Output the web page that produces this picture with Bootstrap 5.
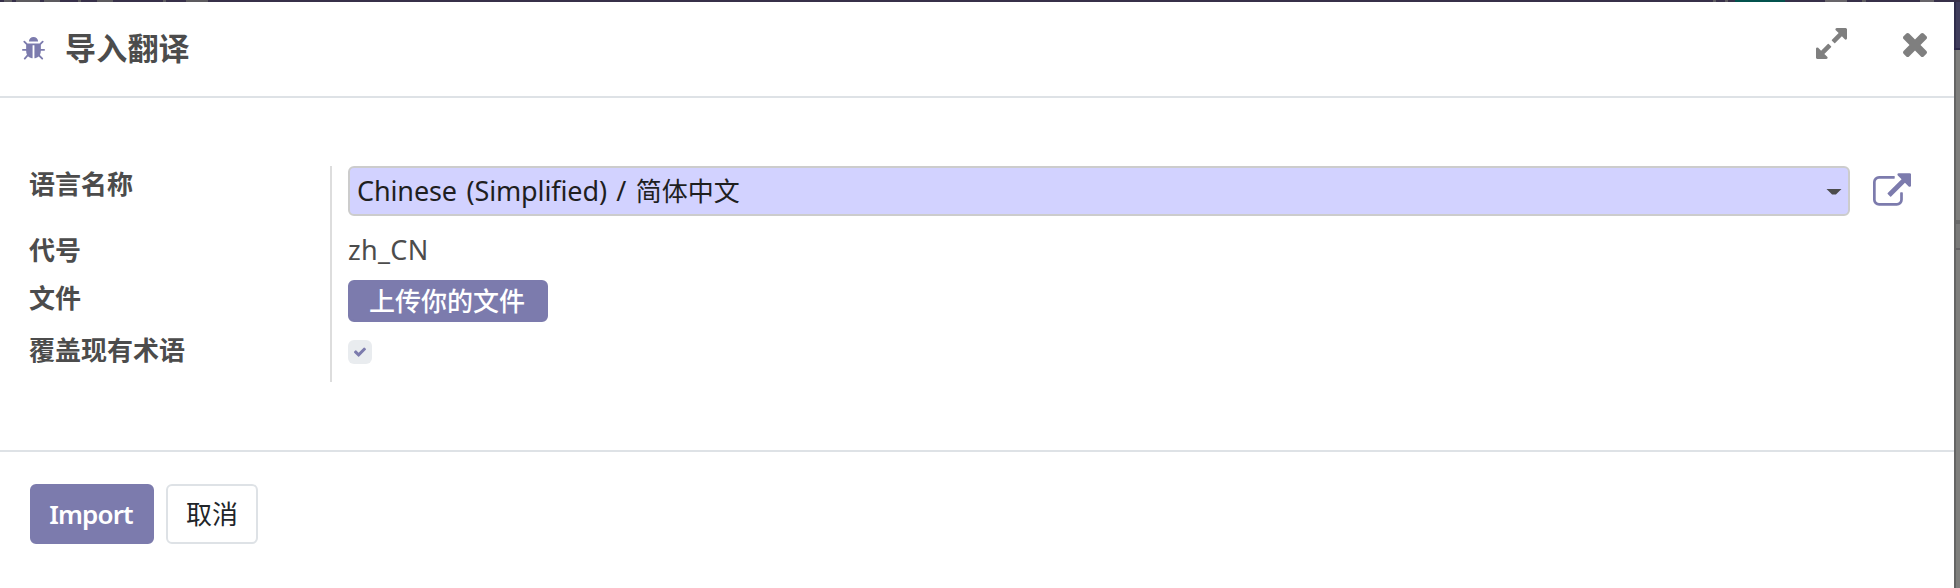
<!DOCTYPE html>
<html lang="zh-CN">
<head>
<meta charset="utf-8">
<title>导入翻译</title>
<link href="https://cdn.jsdelivr.net/npm/bootstrap@5.3.0/dist/css/bootstrap.min.css" rel="stylesheet">
<style>
:root{--brand:#7c7bad}
html,body{height:100%;overflow:hidden}
body{font-family:"Noto Sans","Noto Sans CJK SC",sans-serif;font-size:26px;line-height:30px;color:#4c4c4c;background:#7f7f7d}
svg{display:block;fill:currentColor}
.topstrip{height:2px;background:linear-gradient(#5d5b5f,#5d5b5f) 4px 0/8px 2px no-repeat,linear-gradient(#5d5b5f,#5d5b5f) 16px 0/24px 2px no-repeat,linear-gradient(#5d5b5f,#5d5b5f) 44px 0/16px 2px no-repeat,linear-gradient(#5d5b5f,#5d5b5f) 78px 0/3px 2px no-repeat,linear-gradient(#5d5b5f,#5d5b5f) 97px 0/16px 2px no-repeat,linear-gradient(#5d5b5f,#5d5b5f) 163px 0/3px 2px no-repeat,linear-gradient(#5d5b5f,#5d5b5f) 186px 0/22px 2px no-repeat,linear-gradient(#5d5b5f,#5d5b5f) 1713px 0/3px 2px no-repeat,linear-gradient(#5d5b5f,#5d5b5f) 1725px 0/3px 2px no-repeat,linear-gradient(#03524d,#03524d) 1735px 0/50px 2px no-repeat,linear-gradient(#68656a,#68656a) 1825px 0/22px 2px no-repeat,linear-gradient(#5d5b5f,#5d5b5f) 1862px 0/4px 2px no-repeat,linear-gradient(#68656a,#68656a) 1920px 0/14px 2px no-repeat,#373049}
.dialog-box{width:1954px;height:586px;background:#fff}
.backdrop-edge{width:6px;border-left:2px solid #656565}
.edge-nav{height:46px;margin-left:-2px;background:linear-gradient(90deg,#302d4c 2px,#403d5c 2px)}
.edge-line{height:2px;margin-left:-2px;background:#2c2849}
.edge-mid{height:170px}
.edge-bar{height:30px;background:#7a7a79;border-top:4px solid #696969;border-bottom:2px solid #646265}
.dialog-head{height:96px;border-bottom:2px solid #dee2e6;padding:0 27px 0 22px}
.head-left{padding-bottom:2px}
.dialog-title{font-size:31px;font-weight:700;line-height:36px;margin:0 0 0 20px;letter-spacing:.2px}
.head-icons{color:#7f7f7f;gap:56px;padding-bottom:9px}
.expand-icon{margin-bottom:2px}
.brand{color:var(--brand)}
.dialog-main{height:354px;padding:68px 43px 0 29px;border-bottom:2px solid #dee2e6}
.labels{width:303px;height:216px;border-right:2px solid #ddd;font-weight:700}
.labels label{display:block}
.lang-field{height:50px;border:2px solid #ccc;border-radius:6px;background:#d2d2ff;color:#1f1f1f;padding:0 6px 1px 7px}
.latin{font-size:27px;letter-spacing:-.12px;word-spacing:2.6px}
.code-value{font-size:27px;letter-spacing:.3px;padding-top:19px;height:64px}
.open-icon{margin-left:23px;margin-bottom:3px}
.caret{width:16px;height:6px;margin-top:2px;background:#4c4c4c;clip-path:polygon(0 0,100% 0,62% 100%,38% 100%)}
.btn{--bs-btn-font-size:26px;--bs-btn-line-height:30px;--bs-btn-border-radius:6px;--bs-btn-border-width:2px;font-family:inherit}
.btn-brand{--bs-btn-color:#fff;--bs-btn-bg:#7c7bad;--bs-btn-border-color:#7c7bad;font-weight:500}
.btn-plain{--bs-btn-color:#212529;--bs-btn-bg:#fff;--bs-btn-border-color:#dee2e6}
.btn.upload{width:200px;height:42px;padding:0 2px 1px 0}
.btn.import{width:124px;height:60px;padding:0 2px 0 0;font-weight:600;letter-spacing:-.9px}
.btn.cancel{width:92px;height:60px;padding:0}
.tick{width:24px;height:24px;border-radius:6px;background:#e9ecef;margin-top:18px}
.dialog-foot{padding:32px 30px;gap:12px}
</style>
</head>
<body>
<div class="topstrip"></div>
<div class="d-flex">
<main class="dialog-box">
  <header class="dialog-head d-flex align-items-center justify-content-between">
    <div class="head-left d-flex align-items-center">
      <svg class="brand" width="23" height="23" viewBox="96 64 1600 1600"><path d="M1696 960q0 26-19 45t-45 19h-224q0 171-67 290l208 209q19 19 19 45t-19 45q-18 19-45 19t-45-19l-198-197q-5 5-15 13t-42 28.5-65 36.5-82 29-97 13v-896h-128v896q-51 0-101.5-13.5t-87-33-66-39-43.5-32.5l-15-14-183 207q-20 21-48 21-24 0-43-16-19-18-20.5-44.5t15.5-46.5l202-227q-58-114-58-274h-224q-26 0-45-19t-19-45 19-45 45-19h224v-294l-173-173q-19-19-19-45t19-45 45-19 45 19l173 173h844l173-173q19-19 45-19t45 19 19 45-19 45l-173 173v294h224q26 0 45 19t19 45zm-480-576h-640q0-133 93.5-226.5t226.5-93.5 226.5 93.5 93.5 226.5z"/></svg>
      <h1 class="dialog-title">导入翻译</h1>
    </div>
    <div class="head-icons d-flex align-items-center">
      <svg class="expand-icon" width="31" height="31" viewBox="128 128 1536 1536"><path d="M883 1056q0 13-10 23l-332 332 144 144q19 19 19 45t-19 45-45 19h-448q-26 0-45-19t-19-45v-448q0-26 19-45t45-19 45 19l144 144 332-332q10-10 23-10t23 10l114 114q10 10 10 23zm781-864v448q0 26-19 45t-45 19-45-19l-144-144-332 332q-10 10-23 10t-23-10l-114-114q-10-10-10-23t10-23l332-332-144-144q-19-19-19-45t19-45 45-19h448q26 0 45 19t19 45z"/></svg>
      <svg width="24" height="24" viewBox="302 366 1188 1188"><path d="M1490 1322q0 40-28 68l-136 136q-28 28-68 28t-68-28l-294-294-294 294q-28 28-68 28t-68-28l-136-136q-28-28-28-68t28-68l294-294-294-294q-28-28-28-68t28-68l136-136q28-28 68-28t68 28l294 294 294-294q28-28 68-28t68 28l136 136q28 28 28 68t-28 68l-294 294 294 294q28 28 28 68z"/></svg>
    </div>
  </header>
  <section class="dialog-main d-flex">
    <div class="labels flex-shrink-0">
      <label style="padding-top:3px">语言名称</label>
      <label style="padding-top:36px">代号</label>
      <label style="padding-top:18px">文件</label>
      <label style="padding-top:22px">覆盖现有术语</label>
    </div>
    <div class="flex-grow-1 ps-3">
      <div class="d-flex align-items-center">
        <div class="lang-field flex-grow-1 d-flex align-items-center justify-content-between"><span><span class="latin">Chinese (Simplified) / </span>简体中文</span><span class="caret"></span></div>
        <svg class="brand open-icon" width="38" height="33" viewBox="0 0 1792 1536"><path d="M1408 928v320q0 119-84.5 203.5t-203.5 84.5h-832q-119 0-203.5-84.5t-84.5-203.5v-832q0-119 84.5-203.5t203.5-84.5h704q14 0 23 9t9 23v64q0 14-9 23t-23 9h-704q-66 0-113 47t-47 113v832q0 66 47 113t113 47h832q66 0 113-47t47-113v-320q0-14 9-23t23-9h64q14 0 23 9t9 23zm384-864v512q0 26-19 45t-45 19-45-19l-176-176-652 652q-10 10-23 10t-23-10l-114-114q-10-10-10-23t10-23l652-652-176-176q-19-19-19-45t19-45 45-19h512q26 0 45 19t19 45z"/></svg>
      </div>
      <div class="code-value">zh_CN</div>
      <button class="btn btn-brand d-block upload">上传你的文件</button>
      <div class="tick brand d-flex align-items-center justify-content-center"><svg width="12" height="10" viewBox="121 298 1550 1224"><path d="M1671 566q0 40-28 68l-724 724-136 136q-28 28-68 28t-68-28l-136-136-362-362q-28-28-28-68t28-68l136-136q28-28 68-28t68 28l294 295 656-657q28-28 68-28t68 28l136 136q28 28 28 68z"/></svg></div>
    </div>
  </section>
  <footer class="dialog-foot d-flex">
    <button class="btn btn-brand import">Import</button>
    <button class="btn btn-plain cancel">取消</button>
  </footer>
</main>
<aside class="backdrop-edge"><div class="edge-nav"></div><div class="edge-line"></div><div class="edge-mid"></div><div class="edge-bar"></div></aside>
</div>
<script src="https://cdn.jsdelivr.net/npm/bootstrap@5.3.0/dist/js/bootstrap.bundle.min.js"></script>
</body>
</html>
